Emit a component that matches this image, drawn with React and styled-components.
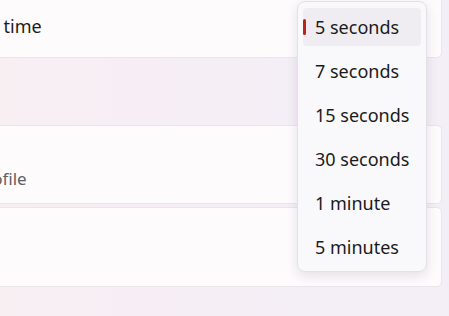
import React from "react";
import styled, { createGlobalStyle } from "styled-components";

const GlobalStyle = createGlobalStyle`
    html, body {
        margin: 0;
        padding: 0;
        overflow: hidden;
    }
    body {
        font-family: "Noto Sans", "Open Sans", sans-serif;
        background: #f6eff5;
    }
`;

const Page = styled.div`
    position: relative;
    width: 449px;
    height: 316px;
    overflow: hidden;
    background: linear-gradient(90deg, #f8eff3 0%, #f5eef6 60%, #f3eff7 100%);
`;

const Column = styled.div`
    display: flex;
    flex-direction: column;
    margin-left: -260px;
    width: 702px;
    margin-top: -7px;
`;

const Card = styled.div`
    box-sizing: border-box;
    height: ${(p) => p.height || 79}px;
    margin-top: ${(p) => p.gap || 0}px;
    display: flex;
    flex-direction: column;
    justify-content: center;
    padding-left: 16px;
    background: #fdfbfc;
    border: 1px solid #ebe4ea;
    border-radius: 5px;
    color: #1b1b1b;
    overflow: hidden;
`;

const Title = styled.div`
    font-size: 18px;
    line-height: 24px;
    white-space: nowrap;
    margin-left: ${(p) => p.shift || 0}px;
`;

const Caption = styled.div`
    font-size: 17px;
    line-height: 22px;
    color: #616161;
    white-space: nowrap;
    margin-left: ${(p) => p.shift || 0}px;
    margin-top: ${(p) => p.top || 0}px;
`;

const Menu = styled.div`
    position: absolute;
    left: 297px;
    top: 1px;
    width: 130px;
    height: 271px;
    box-sizing: border-box;
    padding: 6px 5px;
    display: flex;
    flex-direction: column;
    gap: 6px;
    background: #f9f8fa;
    border: 1px solid #e3e1e5;
    border-radius: 8px;
    box-shadow: 0 4px 12px rgba(60, 40, 70, 0.12);
`;

const Option = styled.div`
    position: relative;
    height: 38px;
    flex: none;
    display: flex;
    align-items: center;
    padding-left: 12px;
    border-radius: 4px;
    font-size: 18px;
    color: #1b1b1b;
    background: ${(p) => (p.selected ? "#efedf1" : "transparent")};

    &::before {
        content: "";
        display: ${(p) => (p.selected ? "block" : "none")};
        position: absolute;
        left: 0;
        top: 11px;
        width: 3px;
        height: 16px;
        border-radius: 2px;
        background: #b8251b;
    }
`;

const options = ["5 seconds", "7 seconds", "15 seconds", "30 seconds", "1 minute", "5 minutes"];

const App = () => (
    <Page>
        <GlobalStyle />
        <Column>
            <Card height={65}>
                <Title shift={-106}>Dismiss notifications after this amount of time</Title>
            </Card>
            <Card gap={67} height={79}>
                <Caption shift={-90} top={29}>Turn on color filters to customize your profile</Caption>
            </Card>
            <Card gap={3} height={80} />
        </Column>
        <Menu>
            {options.map((o, i) => (
                <Option key={i} selected={i === 0}>{o}</Option>
            ))}
        </Menu>
    </Page>
);

export default App;
